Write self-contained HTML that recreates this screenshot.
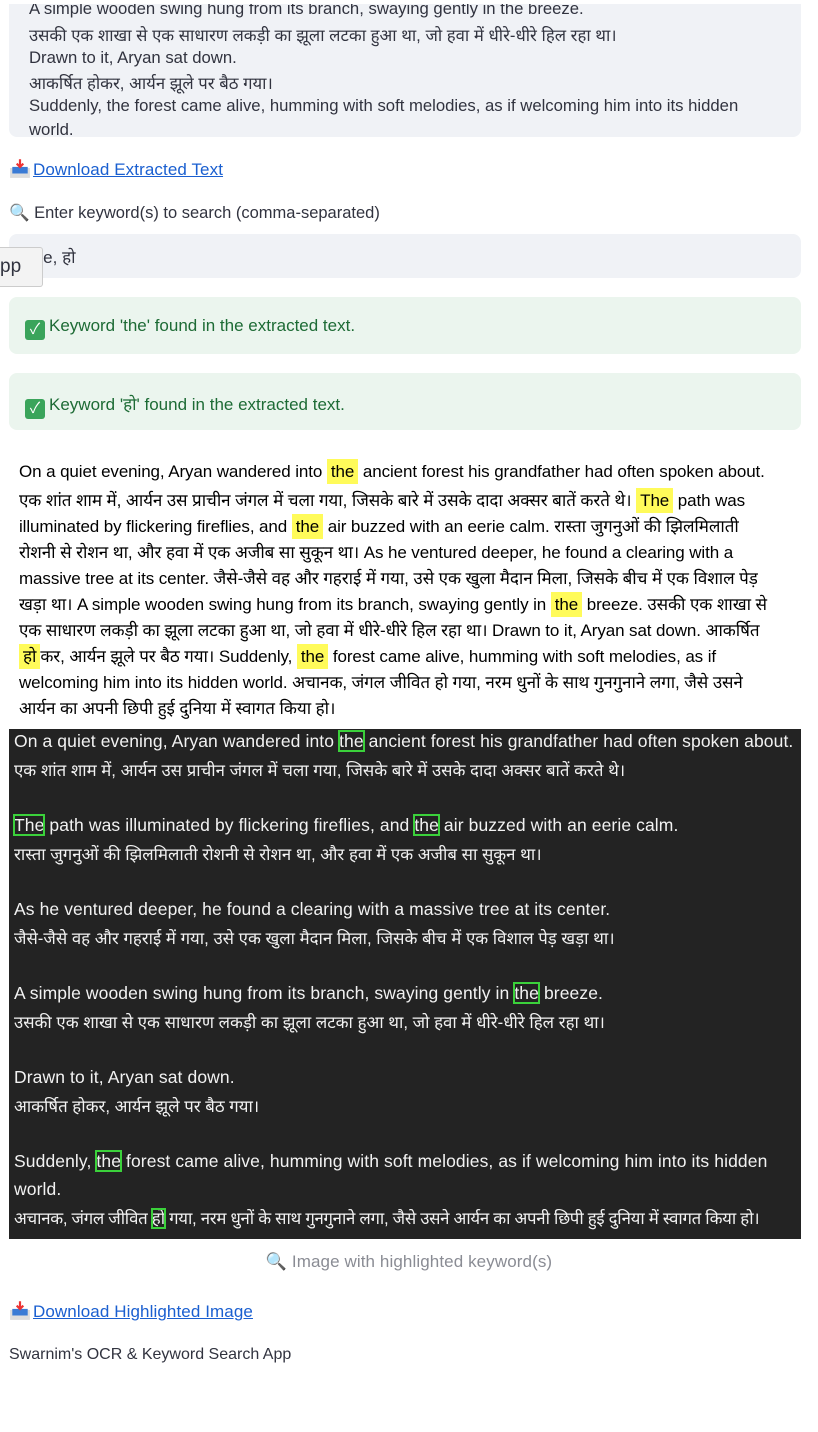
<!DOCTYPE html>
<html><head><meta charset="utf-8"><style>
body{margin:0;width:818px;height:1432px;background:#fff;font-family:"Liberation Sans","Noto Sans CJK SC",sans-serif;color:#31333f;position:relative;overflow:hidden}
.a{position:absolute;white-space:nowrap}
.ta{left:9px;top:4px;width:792px;height:133px;background:#f0f2f6;border-radius:0 0 8px 8px;overflow:hidden}
.ta div{position:absolute;left:20px;font-size:16.7px;letter-spacing:0}
.lnk{color:#1a5fd0;text-decoration:underline;font-size:17px;letter-spacing:0.1px}
.inp{left:9px;top:234px;width:792px;height:44px;background:#f0f2f6;border-radius:8px}
.ok{left:9px;width:792px;height:57px;background:#ebf5ee;border-radius:8px;color:#1d6b35;font-size:17px;letter-spacing:0}
.ok span{position:absolute;left:16px;top:19px}
.ck{display:inline-block;width:20px;height:20px;background:#3aa45b;border-radius:3px;color:#fff;text-align:center;font-size:15px;line-height:20px;margin-right:4px;vertical-align:-3px;font-style:normal}
.p div{position:absolute;left:19px;font-size:17px;letter-spacing:-0.1px;color:#000}
.h{background:#fffb5a;padding:3px 4px}
.img{left:9px;top:729px;width:792px;height:510px;background:#232323}
.img div{position:absolute;left:5px;font-size:17.5px;color:#f2f2f2;letter-spacing:0.1px}
.img div.hi{font-size:16.8px;letter-spacing:0}
.g{outline:2px solid #3bd13b;outline-offset:-1px}
.ic{display:inline-block;width:22px;height:20px;vertical-align:-3px;margin-right:2px}
</style></head><body>
<div class="a ta">
<div style="top:-5px">A simple wooden swing hung from its branch, swaying gently in the breeze.</div>
<div style="top:19px">उसकी एक शाखा से एक साधारण लकड़ी का झूला लटका हुआ था, जो हवा में धीरे-धीरे हिल रहा था।</div>
<div style="top:44px">Drawn to it, Aryan sat down.</div>
<div style="top:67px">आकर्षित होकर, आर्यन झूले पर बैठ गया।</div>
<div style="top:92px">Suddenly, the forest came alive, humming with soft melodies, as if welcoming him into its hidden</div>
<div style="top:116px">world.</div>
</div>
<div class="a" style="left:9px;top:158px"><svg class="ic" viewBox="0 0 20 18"><rect x="1" y="9" width="18" height="9" fill="#ddd"/><rect x="3" y="8" width="14" height="6" fill="#3a7bd5"/><path d="M10 1v7M7 5l3 3 3-3" stroke="#e33" stroke-width="2" fill="none"/></svg><span class="lnk">Download Extracted Text</span></div>
<div class="a" style="left:9px;top:204px;font-size:16.5px">🔍 Enter keyword(s) to search (comma-separated)</div>
<div class="a inp"><span style="position:absolute;left:20px;top:11px;font-size:17px">the, हो</span></div>
<div class="a" style="left:0;top:247px;width:42px;height:38px;background:#f3f3f3;border:1px solid #ccc;border-left:none;border-radius:0 3px 3px 0;font-size:19px;line-height:38px">pp</div>
<div class="a ok" style="top:297px"><span><i class="ck">✓</i>Keyword 'the' found in the extracted text.</span></div>
<div class="a ok" style="top:373px"><span><i class="ck">✓</i>Keyword 'हो' found in the extracted text.</span></div>
<div class="p">
<div class="a" style="top:462px">On a quiet evening, Aryan wandered into <span class="h">the</span> ancient forest his grandfather had often spoken about.</div>
<div class="a" style="top:488px">एक शांत शाम में, आर्यन उस प्राचीन जंगल में चला गया, जिसके बारे में उसके दादा अक्सर बातें करते थे। <span class="h">The</span> path was</div>
<div class="a" style="top:514px">illuminated by flickering fireflies, and <span class="h">the</span> air buzzed with an eerie calm. रास्ता जुगनुओं की झिलमिलाती</div>
<div class="a" style="top:540px">रोशनी से रोशन था, और हवा में एक अजीब सा सुकून था। As he ventured deeper, he found a clearing with a</div>
<div class="a" style="top:566px">massive tree at its center. जैसे-जैसे वह और गहराई में गया, उसे एक खुला मैदान मिला, जिसके बीच में एक विशाल पेड़</div>
<div class="a" style="top:592px">खड़ा था। A simple wooden swing hung from its branch, swaying gently in <span class="h">the</span> breeze. उसकी एक शाखा से</div>
<div class="a" style="top:618px">एक साधारण लकड़ी का झूला लटका हुआ था, जो हवा में धीरे-धीरे हिल रहा था। Drawn to it, Aryan sat down. आकर्षित</div>
<div class="a" style="top:644px"><span class="h">हो</span>कर, आर्यन झूले पर बैठ गया। Suddenly, <span class="h">the</span> forest came alive, humming with soft melodies, as if</div>
<div class="a" style="top:670px">welcoming him into its hidden world. अचानक, जंगल जीवित हो गया, नरम धुनों के साथ गुनगुनाने लगा, जैसे उसने</div>
<div class="a" style="top:696px">आर्यन का अपनी छिपी हुई दुनिया में स्वागत किया हो।</div>
</div>
<div class="a img">
<div style="top:2px">On a quiet evening, Aryan wandered into <span class="g">the</span> ancient forest his grandfather had often spoken about.</div>
<div class="hi" style="top:29px">एक शांत शाम में, आर्यन उस प्राचीन जंगल में चला गया, जिसके बारे में उसके दादा अक्सर बातें करते थे।</div>
<div style="top:86px"><span class="g">The</span> path was illuminated by flickering fireflies, and <span class="g">the</span> air buzzed with an eerie calm.</div>
<div class="hi" style="top:113px">रास्ता जुगनुओं की झिलमिलाती रोशनी से रोशन था, और हवा में एक अजीब सा सुकून था।</div>
<div style="top:170px">As he ventured deeper, he found a clearing with a massive tree at its center.</div>
<div class="hi" style="top:197px">जैसे-जैसे वह और गहराई में गया, उसे एक खुला मैदान मिला, जिसके बीच में एक विशाल पेड़ खड़ा था।</div>
<div style="top:254px">A simple wooden swing hung from its branch, swaying gently in <span class="g">the</span> breeze.</div>
<div class="hi" style="top:281px">उसकी एक शाखा से एक साधारण लकड़ी का झूला लटका हुआ था, जो हवा में धीरे-धीरे हिल रहा था।</div>
<div style="top:338px">Drawn to it, Aryan sat down.</div>
<div class="hi" style="top:365px">आकर्षित होकर, आर्यन झूले पर बैठ गया।</div>
<div style="top:422px">Suddenly, <span class="g">the</span> forest came alive, humming with soft melodies, as if welcoming him into its hidden</div>
<div style="top:450px">world.</div>
<div class="hi" style="top:477px;letter-spacing:-0.3px">अचानक, जंगल जीवित <span class="g">हो</span> गया, नरम धुनों के साथ गुनगुनाने लगा, जैसे उसने आर्यन का अपनी छिपी हुई दुनिया में स्वागत किया हो।</div>
</div>
<div class="a" style="left:0;width:818px;text-align:center;top:1252px;color:#8a8c94;font-size:17px;letter-spacing:0.1px">🔍 Image with highlighted keyword(s)</div>
<div class="a" style="left:9px;top:1300px"><svg class="ic" viewBox="0 0 20 18"><rect x="1" y="9" width="18" height="9" fill="#ddd"/><rect x="3" y="8" width="14" height="6" fill="#3a7bd5"/><path d="M10 1v7M7 5l3 3 3-3" stroke="#e33" stroke-width="2" fill="none"/></svg><span class="lnk">Download Highlighted Image</span></div>
<div class="a" style="left:9px;top:1346px;font-size:16px">Swarnim's OCR &amp; Keyword Search App</div>
</body></html>
